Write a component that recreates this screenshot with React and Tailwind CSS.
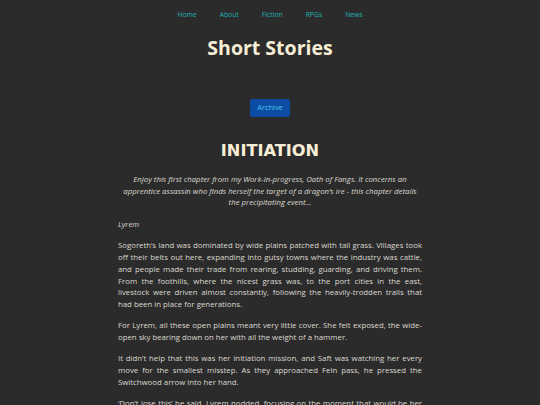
export default function App() {
  const links = ["Home", "About", "Fiction", "RPGs", "News"];
  const paragraphs = [
    "Sogoreth’s land was dominated by wide plains patched with tall grass. Villages took off their belts out here, expanding into gutsy towns where the industry was cattle, and people made their trade from rearing, studding, guarding, and driving them. From the foothills, where the nicest grass was, to the port cities in the east, livestock were driven almost constantly, following the heavily-trodden trails that had been in place for generations.",
    "For Lyrem, all these open plains meant very little cover. She felt exposed, the wide-open sky bearing down on her with all the weight of a hammer.",
    "It didn’t help that this was her initiation mission, and Saft was watching her every move for the smallest misstep. As they approached Feln pass, he pressed the Switchwood arrow into her hand.",
    "‘Don’t lose this’ he said. Lyrem nodded, focusing on the moment that would be her proving, the moment she had trained for since she was a child.",
  ];

  return (
    <div className="min-h-[405px] bg-[#2b2b2b] font-['Open_Sans',sans-serif] overflow-hidden">
      <nav className="flex justify-center gap-[23px] pt-[10px] text-[6.8px] leading-[10px] text-[#24b2b4]">
        {links.map((l) => (
          <a key={l} href="#" className="block">
            {l}
          </a>
        ))}
      </nav>

      <h1 className="mt-[16px] text-center text-[19.5px] leading-[24px] font-bold text-[#f8eed6]">
        Short Stories
      </h1>

      <div className="mt-[39px] flex justify-center">
        <a
          href="#"
          className="flex h-[18px] w-[40px] items-center justify-center rounded-[2px] bg-[#0c4da3] text-[7.4px] text-[#4cc2ee]"
        >
          Archive
        </a>
      </div>

      <main className="mx-auto w-[304px]">
        <h2 className="mt-[24px] text-center font-['DejaVu_Sans',sans-serif] text-[16.2px] leading-[20px] font-bold text-[#f8eed6]">
          INITIATION
        </h2>

        <p className="mt-[13px] text-center text-[7.8px] leading-[11.7px] italic text-[#dcd9d0]">
          Enjoy this first chapter from my Work-in-progress, Oath of Fangs. It concerns an apprentice
          assassin who finds herself the target of a dragon’s ire - this chapter details the
          precipitating event…
        </p>

        <p className="mt-[10px] text-[7.8px] leading-[11.7px] italic text-[#dcd9d0]">Lyrem</p>

        {paragraphs.map((p, i) => (
          <p key={i} className="mt-[9.6px] text-justify text-[7.8px] leading-[11.7px] text-[#dcd9d0]">
            {p}
          </p>
        ))}
      </main>
    </div>
  );
}
